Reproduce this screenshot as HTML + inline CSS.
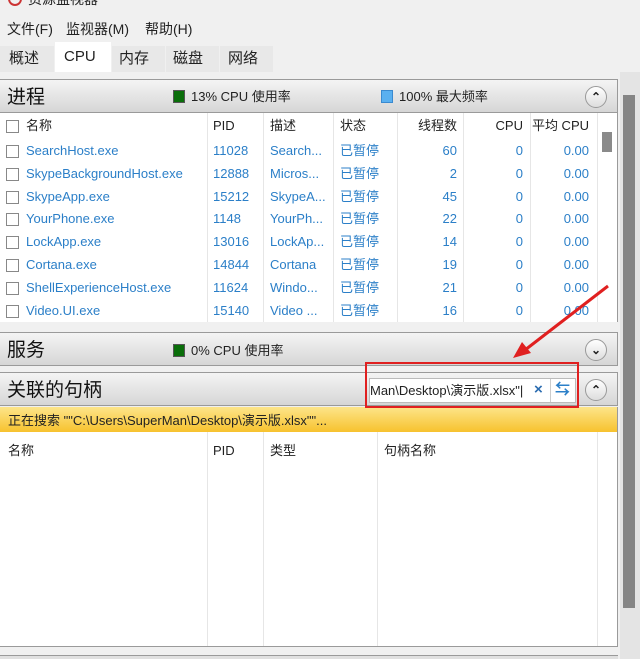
<!DOCTYPE html>
<html><head><meta charset="utf-8"><style>
*{margin:0;padding:0;box-sizing:border-box}
body{width:640px;height:659px;overflow:hidden;background:#f0f0f0;font-family:"Liberation Sans","Noto Sans CJK SC",sans-serif;font-size:13px;color:#222;position:relative}
.a{position:absolute;white-space:nowrap;line-height:16px}
.hdr{position:absolute;left:0;width:618px;height:34px;background:linear-gradient(#f4f4f4,#d6d6d6);border:1px solid #9a9a9a;border-left:none}
.hdr .t{position:absolute;left:7px;top:7px;font-size:19px;line-height:22px;color:#111}
.sq{display:inline-block;width:12px;height:13px;vertical-align:-2px;margin-right:6px;border:1px solid #555}
.btn{position:absolute;right:10px;top:6px;width:22px;height:22px;border-radius:50%;border:1px solid #999;background:linear-gradient(#fff,#ddd);text-align:center;font-size:12px;line-height:20px;font-weight:bold}
.list{position:absolute;left:0;width:618px;background:#fff;border-right:1px solid #9a9a9a}
.cb{position:absolute;left:6px;width:13px;height:13px;border:1px solid #888;background:#fff}
.bl{color:#2b7fc8}
.vl{position:absolute;width:1px;background:#e6e6e6}
</style></head><body>
<div class="a" style="left:8px;top:-8px;width:14px;height:14px;border-radius:50%;border:2px solid #c33"></div>
<div class="a" style="left:28px;top:-9px;font-size:14px">资源监视器</div>
<div class="a" style="left:7px;top:21px;font-size:14px">文件(F)</div>
<div class="a" style="left:66px;top:21px;font-size:14px">监视器(M)</div>
<div class="a" style="left:145px;top:21px;font-size:14px">帮助(H)</div>
<div class="a" style="left:0;top:42px;width:640px;height:30px;background:#f0f0f0"></div>
<div class="a" style="left:0;top:46px;width:54px;height:26px;background:#e8e8e8"></div>
<div class="a" style="left:55px;top:42px;width:56px;height:30px;background:#fff"></div>
<div class="a" style="left:112px;top:46px;width:53px;height:26px;background:#e8e8e8"></div>
<div class="a" style="left:166px;top:46px;width:53px;height:26px;background:#e8e8e8"></div>
<div class="a" style="left:220px;top:46px;width:53px;height:26px;background:#e8e8e8"></div>
<div class="a" style="left:9px;top:51px;font-size:15px">概述</div>
<div class="a" style="left:64px;top:49px;font-size:15px">CPU</div>
<div class="a" style="left:119px;top:51px;font-size:15px">内存</div>
<div class="a" style="left:173px;top:51px;font-size:15px">磁盘</div>
<div class="a" style="left:228px;top:51px;font-size:15px">网络</div>
<div class="a" style="left:620px;top:72px;width:20px;height:587px;background:#e4e4e4"></div>
<div class="a" style="left:623px;top:95px;width:12px;height:513px;background:#858585"></div>

<div class="hdr" style="top:79px"><span class="t">进程</span>
<span class="a" style="left:173px;top:9px;font-size:13px"><span class="sq" style="background:#0a6e0a"></span>13% CPU 使用率</span>
<span class="a" style="left:381px;top:9px;font-size:13px"><span class="sq" style="background:#5ab0f0;border-color:#3a8ad0"></span>100% 最大频率</span>
<div class="btn">⌃</div></div>
<div class="list" style="top:113px;height:209px">
<div class="vl" style="left:207px;top:0;height:209px"></div><div class="vl" style="left:263px;top:0;height:209px"></div><div class="vl" style="left:333px;top:0;height:209px"></div><div class="vl" style="left:397px;top:0;height:209px"></div><div class="vl" style="left:463px;top:0;height:209px"></div><div class="vl" style="left:530px;top:0;height:209px"></div><div class="vl" style="left:597px;top:0;height:209px"></div>
<div class="a" style="left:602px;top:19px;width:10px;height:20px;background:#8a8a8a"></div>
</div>
<div id="rows"></div>
<script>
var R=[["名称","PID","描述","状态","线程数","CPU","平均 CPU"],
["SearchHost.exe","11028","Search...","已暂停","60","0","0.00"],
["SkypeBackgroundHost.exe","12888","Micros...","已暂停","2","0","0.00"],
["SkypeApp.exe","15212","SkypeA...","已暂停","45","0","0.00"],
["YourPhone.exe","1148","YourPh...","已暂停","22","0","0.00"],
["LockApp.exe","13016","LockAp...","已暂停","14","0","0.00"],
["Cortana.exe","14844","Cortana","已暂停","19","0","0.00"],
["ShellExperienceHost.exe","11624","Windo...","已暂停","21","0","0.00"],
["Video.UI.exe","15140","Video ...","已暂停","16","0","0.00"]];
var h="";
R.forEach(function(r,i){var y=i?143+(i-1)*22.8:118;var c=i?' bl':'';var s='style="top:'+y+'px;';
h+='<div class="cb" style="top:'+(y+2)+'px"></div>';
h+='<div class="a'+c+'" '+s+'left:26px">'+r[0]+'</div>';
h+='<div class="a'+c+'" '+s+'left:213px">'+r[1]+'</div>';
h+='<div class="a'+c+'" '+s+'left:270px">'+r[2]+'</div>';
h+='<div class="a'+c+'" '+s+'left:340px">'+r[3]+'</div>';
h+='<div class="a'+c+'" '+s+'right:183px">'+r[4]+'</div>';
h+='<div class="a'+c+'" '+s+'right:117px">'+r[5]+'</div>';
h+='<div class="a'+c+'" '+s+'right:51px">'+r[6]+'</div>';});
document.getElementById("rows").innerHTML=h;
</script>

<div class="hdr" style="top:332px"><span class="t">服务</span>
<span class="a" style="left:173px;top:10px;font-size:13px"><span class="sq" style="background:#0a6e0a"></span>0% CPU 使用率</span>
<div class="btn">⌄</div></div>
<div class="hdr" style="top:372px"><span class="t">关联的句柄</span>
<div class="a" style="left:369px;top:5px;width:207px;height:25px;background:#fff;border:1px solid #bbb;overflow:hidden">
<span class="a" style="left:0;top:4px;font-size:13px">Man\Desktop\演示版.xlsx"|</span>
<span class="a" style="left:164px;top:3px;font-size:15px;color:#2b6cb0;font-weight:bold;background:#fff;width:16px">×</span>
<span class="a" style="left:180px;top:0;width:1px;height:24px;background:#ccc"></span>
<span class="a" style="left:185px;top:3px;font-size:15px;color:#2b7fc8;font-weight:bold">⇆</span></div>
<div class="btn">⌃</div></div>
<div class="a" style="left:0;top:407px;width:618px;height:25px;background:linear-gradient(#fde58a,#f7c22e);border-right:1px solid #9a9a9a"></div>
<div class="a" style="left:8px;top:413px">正在搜索 ""C:\Users\SuperMan\Desktop\演示版.xlsx""...</div>
<div class="list" style="top:432px;height:215px;border-bottom:1px solid #9a9a9a">
<div class="vl" style="left:207px;top:0;height:214px"></div><div class="vl" style="left:263px;top:0;height:214px"></div><div class="vl" style="left:377px;top:0;height:214px"></div><div class="vl" style="left:597px;top:0;height:214px"></div>
<div class="a" style="left:8px;top:11px">名称</div><div class="a" style="left:213px;top:11px">PID</div><div class="a" style="left:270px;top:11px">类型</div><div class="a" style="left:384px;top:11px">句柄名称</div>
</div>
<div class="a" style="left:0;top:655px;width:618px;height:4px;border-top:1px solid #9a9a9a;background:#e0e0e0"></div>
<div class="a" style="left:365px;top:362px;width:214px;height:46px;border:2px solid #e02020"></div>
<svg class="a" style="left:0;top:0" width="640" height="659"><line x1="608" y1="286" x2="525" y2="350" stroke="#e02020" stroke-width="3"/><polygon points="513,358 522,342 531,353" fill="#e02020"/></svg>
</body></html>
